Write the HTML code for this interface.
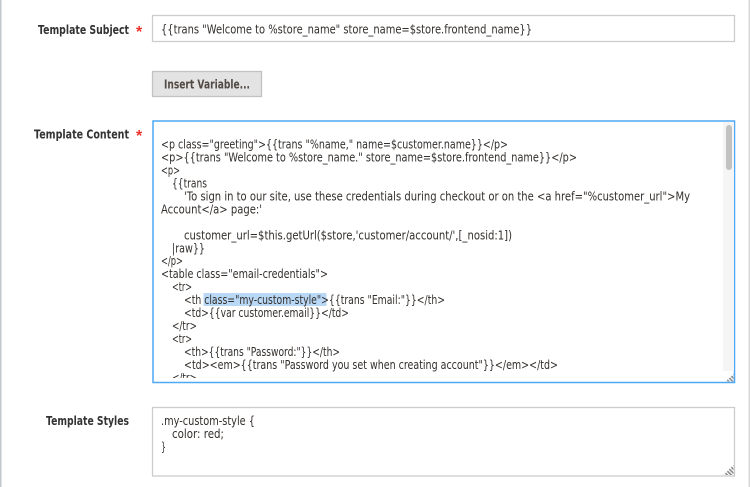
<!DOCTYPE html>
<html>
<head>
<meta charset="utf-8">
<style>
html,body{margin:0;padding:0;background:#fff;}
body{width:750px;height:487px;overflow:hidden;}
svg{display:block;}
text{font-family:"DejaVu Sans",sans-serif;font-size:12.4px;fill:#332f2c;white-space:pre;}
.t{filter:blur(.25px);}
.b{font-weight:bold;fill:#333;font-size:12.4px;}
.s{font-family:"Liberation Sans",sans-serif;fill:#e8342c;font-weight:bold;font-size:16px;}
</style>
</head>
<body>
<svg width="750" height="487" viewBox="0 0 750 487" xmlns="http://www.w3.org/2000/svg">
<defs><clipPath id="c"><rect x="154" y="122" width="569" height="256"/></clipPath>
<pattern id="h" width="2.800" height="2.800" patternUnits="userSpaceOnUse" patternTransform="rotate(45)"><rect width="2.800" height="1.600" fill="#8c8c8c"/></pattern></defs>
<rect x="0" y="0" width="1.500" height="487" fill="#c0c9cf"/>
<rect x="748.500" y="0" width="1.500" height="487" fill="#d8d8d8"/>

<g class="t">
<text class="b" x="38" y="34" textLength="91" lengthAdjust="spacingAndGlyphs">Template Subject</text>
<text class="s" x="136" y="37">*</text>
<text class="b" x="34" y="138.500" textLength="95" lengthAdjust="spacingAndGlyphs">Template Content</text>
<text class="s" x="136" y="141">*</text>
<text class="b" x="46" y="425" textLength="83" lengthAdjust="spacingAndGlyphs">Template Styles</text>
</g>

<rect x="152.500" y="15.500" width="582" height="26" fill="#fff" stroke="#cccccc" stroke-width="1.300"/>
<text class="t" x="161" y="33.500" textLength="371" lengthAdjust="spacingAndGlyphs">{{trans "Welcome to %store_name" store_name=$store.frontend_name}}</text>

<rect x="152.500" y="71.500" width="109" height="25" fill="#e3e3e3" stroke="#c2c2c2" stroke-width="1.300"/>
<text class="t" x="164" y="88.500" textLength="86" lengthAdjust="spacingAndGlyphs" style="font-weight:bold;fill:#514943;font-size:12.400px">Insert Variable...</text>

<rect x="153" y="121" width="581.500" height="261.500" fill="#fff" stroke="#4fa8f5" stroke-width="1.500"/>
<rect x="723" y="122" width="11" height="249" fill="#f5f5f5"/>
<rect x="726" y="125" width="6" height="45" rx="3" fill="#c2c2c2"/>
<polygon points="733.500,374 733.500,381.500 725.500,381.500" fill="url(#h)"/>

<rect x="203.500" y="293" width="123" height="13" fill="#b9d8f6"/>
<g clip-path="url(#c)"><g class="t">
<text x="161" y="148.500" textLength="347" lengthAdjust="spacingAndGlyphs">&lt;p class="greeting"&gt;{{trans "%name," name=$customer.name}}&lt;/p&gt;</text>
<text x="161" y="161.500" textLength="416" lengthAdjust="spacingAndGlyphs">&lt;p&gt;{{trans "Welcome to %store_name." store_name=$store.frontend_name}}&lt;/p&gt;</text>
<text x="161" y="174.500" textLength="19" lengthAdjust="spacingAndGlyphs">&lt;p&gt;</text>
<text x="172" y="187.500" textLength="35" lengthAdjust="spacingAndGlyphs">{{trans</text>
<text x="184" y="200.500" textLength="506" lengthAdjust="spacingAndGlyphs">'To sign in to our site, use these credentials during checkout or on the &lt;a href="%customer_url"&gt;My</text>
<text x="161" y="213.500" textLength="101" lengthAdjust="spacingAndGlyphs">Account&lt;/a&gt; page:'</text>
<text x="184" y="239.500" textLength="328" lengthAdjust="spacingAndGlyphs">customer_url=$this.getUrl($store,'customer/account/',[_nosid:1])</text>
<text x="172" y="252.500" textLength="33" lengthAdjust="spacingAndGlyphs">|raw}}</text>
<text x="161" y="265" textLength="22" lengthAdjust="spacingAndGlyphs">&lt;/p&gt;</text>
<text x="161" y="278" textLength="167" lengthAdjust="spacingAndGlyphs">&lt;table class="email-credentials"&gt;</text>
<text x="172" y="291" textLength="20" lengthAdjust="spacingAndGlyphs">&lt;tr&gt;</text>
<text x="184" y="304" textLength="261" lengthAdjust="spacingAndGlyphs">&lt;th class="my-custom-style"&gt;{{trans "Email:"}}&lt;/th&gt;</text>
<text x="184" y="317" textLength="165" lengthAdjust="spacingAndGlyphs">&lt;td&gt;{{var customer.email}}&lt;/td&gt;</text>
<text x="172" y="330" textLength="25" lengthAdjust="spacingAndGlyphs">&lt;/tr&gt;</text>
<text x="172" y="343" textLength="20" lengthAdjust="spacingAndGlyphs">&lt;tr&gt;</text>
<text x="184" y="356" textLength="156" lengthAdjust="spacingAndGlyphs">&lt;th&gt;{{trans "Password:"}}&lt;/th&gt;</text>
<text x="184" y="369" textLength="374" lengthAdjust="spacingAndGlyphs">&lt;td&gt;&lt;em&gt;{{trans "Password you set when creating account"}}&lt;/em&gt;&lt;/td&gt;</text>
<text x="172" y="382" textLength="25" lengthAdjust="spacingAndGlyphs">&lt;/tr&gt;</text>
</g></g>

<rect x="152.500" y="407.500" width="582" height="68.500" fill="#fff" stroke="#cccccc" stroke-width="1.300"/>
<polygon points="733.500,465 733.500,475 723.500,475" fill="url(#h)"/>
<g class="t">
<text x="161" y="425" textLength="94" lengthAdjust="spacingAndGlyphs">.my-custom-style {</text>
<text x="172" y="438" textLength="52" lengthAdjust="spacingAndGlyphs">color: red;</text>
<text x="161" y="451" textLength="5" lengthAdjust="spacingAndGlyphs">}</text>
</g>
</svg>
</body>
</html>
